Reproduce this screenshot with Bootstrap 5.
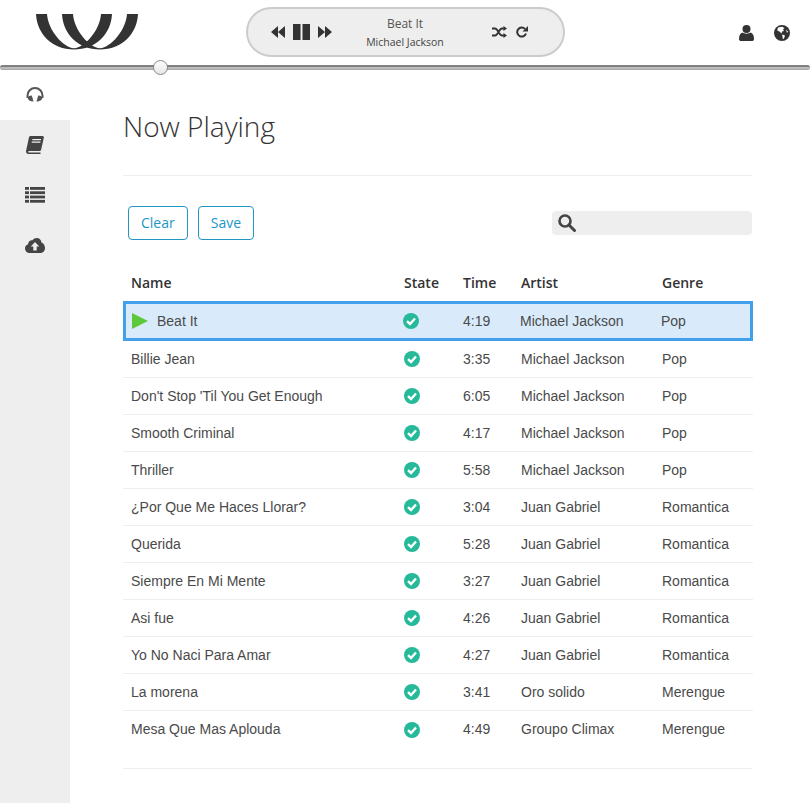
<!DOCTYPE html>
<html lang="en">
<head>
    <meta charset="UTF-8">
    <meta name="viewport" content="width=device-width, initial-scale=1.0">
    <title>Now Playing</title>
    <link href="https://cdn.jsdelivr.net/npm/bootstrap@5.3.0/dist/css/bootstrap.min.css" rel="stylesheet">
    <style>
        body { background-color: #fff; color: #333; font-family: "Open Sans", sans-serif; overflow: hidden; }
        .top-bar { height: 65px; }
        .logo-box { width: 246px; padding: 14px 0 0 36px; align-self: flex-start; }
        .player { width: 319px; height: 50px; margin-top: -1px; background-color: #eee; border: 2px solid #ccc; border-radius: 25px; padding: 0 35px 0 23px; }
        .player-btns { width: 61px; }
        .track-info { text-align: center; line-height: 1; color: #555; padding: 2px 14px 0 0; }
        .track-title { font-size: 12px; margin-bottom: 7px; }
        .track-artist { font-size: 10.5px; color: #444; }
        .player-modes { gap: 9px; }
        .top-icons { gap: 20px; margin-right: 20px; }
        .seek-track { height: 5px; background-color: #bbb; border-top: 2px solid #808080; border-bottom: 1px solid #aaa; border-radius: 3px; }
        .seek-thumb { position: absolute; width: 15px; height: 15px; top: -7px; margin-left: -7px; border-radius: 50%; background: linear-gradient(#fff, #e6e6e6); border: 1px solid #888; }
        .page-body { height: 733px; }
        .side-nav { width: 70px; background-color: #eee; flex: none; }
        .side-item { height: 50px; display: flex; align-items: center; justify-content: center; }
        .side-item.is-active { background-color: #fff; padding-bottom: 1px; }
        .content { width: 629px; margin-left: 53px; }
        .page-title { font-size: 28px; font-weight: 300; line-height: 38px; margin: 37px 0 30px; color: #333; }
        .rule { height: 1px; background-color: #eee; }
        .tool-row { padding: 30px 0 0 5px; }
        .tool-btn { font-size: 14px; height: 34px; padding: 0 12px; line-height: 30px; color: #2196c4; border: 1px solid #2196c4; border-radius: 4px; background: #fff; }
        .tool-gap { margin-right: 10px; }
        .search-box { width: 200px; height: 24px; background-color: #eee; border-radius: 4px; padding-left: 6px; }
        .tracks { table-layout: fixed; width: 630px; border-collapse: separate; border-spacing: 0; margin: 25px 0 20px; color: #4a4a4a; font-family: "Liberation Sans", Arial, sans-serif; font-size: 14px; }
        .tracks th { font-family: "Open Sans", sans-serif; font-size: 14px; font-weight: 600; color: #333; height: 36px; padding: 0 8px 2px; border: 0; vertical-align: middle; }
        .tracks td { height: 37px; padding: 0 8px; vertical-align: middle; border-bottom: 1px solid #eee; }
        .tracks tr:last-child td { border-bottom: 0; }
        .col-state { width: 59px; }
        .col-time { width: 58px; }
        .col-artist { width: 141px; }
        .col-genre { width: 99px; }
        .tracks .playing td { height: 40px; background-color: #d9ebfb; border-top: 3px solid #42a0ea; border-bottom: 3px solid #42a0ea; }
        .tracks .playing td:first-child { border-left: 3px solid #42a0ea; padding-left: 6px; }
        .tracks .playing td:last-child { border-right: 3px solid #42a0ea; }
        .tracks .playing td:nth-child(n+4) { padding-left: 7px; }
        .tracks .playing .check { margin-left: -1px; }
        .play-mark { margin-right: 9px; vertical-align: -3px; }
        .check { display: block; }
    </style>
</head>
<body>
    <div class="top-bar d-flex align-items-center">
        <div class="logo-box">
            <svg width="102" height="36" viewBox="36 14 102 36" fill="#333"><path d="M36 14C37 34 52 49.500 74 49.500C96 49.500 111 34 112 14H101C100 30 85 47.500 74 48.200C63 47.500 48 30 47 14Z"/><path d="M62 14C63 34 78 49.500 100 49.500C122 49.500 137 34 138 14H127C126 30 111 47.500 100 48.200C89 47.500 74 30 73 14Z"/></svg>
        </div>
        <div class="player d-flex align-items-center">
            <div class="player-btns d-flex align-items-center justify-content-between">
                <svg width="14" height="12" viewBox="0 0 14 12" fill="#333"><path d="M7 0V12L0 6ZM14 0V12L7 6Z"/></svg>
                <svg width="17" height="16" viewBox="0 0 17 16" fill="#333"><rect width="7.500" height="16"/><rect x="9.500" width="7.500" height="16"/></svg>
                <svg width="14" height="12" viewBox="0 0 14 12" fill="#333"><path d="M0 0V12L7 6ZM7 0V12L14 6Z"/></svg>
            </div>
            <div class="track-info flex-grow-1">
                <div class="track-title">Beat It</div>
                <div class="track-artist">Michael Jackson</div>
            </div>
            <div class="player-modes d-flex align-items-center">
                <svg width="15" height="12" viewBox="0 0 15 12" fill="none" stroke="#333" stroke-width="1.800"><path d="M0 2.500H3C6 2.500 7 9.500 10 9.500H12.500M0 9.500H3C6 9.500 7 2.500 10 2.500H12.500"/><path d="M11.500 0L15 2.500L11.500 5ZM11.500 7L15 9.500L11.500 12Z" fill="#333" stroke="none"/></svg>
                <svg width="12" height="12" viewBox="0 0 12 12" fill="none" stroke="#333" stroke-width="2"><path d="M10 7.500A4.500 4.500 0 1 1 9 3"/><path d="M12 0V5.500H6.500Z" fill="#333" stroke="none"/></svg>
            </div>
        </div>
        <div class="top-icons ms-auto d-flex align-items-center">
            <svg width="15" height="16" viewBox="0 0 15 16" fill="#333"><circle cx="7.500" cy="4" r="4"/><path d="M0 14C0 10 1.500 8 3.500 7.500C5 9 10 9 11.500 7.500C13.500 8 15 10 15 14C15 15.500 14 16 13 16H2C1 16 0 15.500 0 14Z"/></svg>
            <svg width="16" height="16" viewBox="0 0 16 16"><circle cx="8" cy="8" r="8" fill="#333"/><path d="M4 2.500L8 1.800L10.500 3L9 4.500L10 6L8 6.500L7.500 8.500L5.500 6.500L3.200 5.500ZM8 9.500L11 10.500L10 13.500L8.800 14L8.500 11.500ZM12 4.500L14 6.500L13 8Z" fill="#fff"/></svg>
        </div>
    </div>

    <div class="seek-track position-relative">
        <div class="seek-thumb" style="left: 19.8%"></div>
    </div>

    <div class="page-body d-flex">
        <div class="side-nav">
            <div class="side-item is-active">
                <svg width="18" height="15" viewBox="0 0 18 15" fill="#555"><path d="M.5 11V8.500A8.500 8.500 0 0 1 17.500 8.500V11H15.500V8.500A6.500 6.500 0 0 0 2.500 8.500V11Z"/><path d="M5.800 8.500L7.500 14.500C4 14.500 1.800 13 1.800 10.800C1.800 9.500 3 8.700 5.800 8.500ZM12.200 8.500L10.500 14.500C14 14.500 16.200 13 16.200 10.800C16.200 9.500 15 8.700 12.200 8.500Z"/></svg>
            </div>
            <div class="side-item">
                <svg width="18" height="18" viewBox="0 0 18 18" fill="#444"><path d="M4.500 0H16.500C17.500 0 18 .8 17.800 1.800L15.200 13.500C15 14.500 14.200 15 13.200 15H3.200C2.500 15 2.200 15.700 2.300 16C2.400 16.400 2.800 16.500 3.200 16.500H14.500V18H2.700C1 18 0 16.800 0 15.500C0 15 .1 14.600 .2 14.200L3 1.200C3.200 .4 3.700 0 4.500 0Z"/><path d="M6.500 3H15V4.200H6.200ZM5.900 5.500H14.400V6.700H5.600Z" fill="#eee"/></svg>
            </div>
            <div class="side-item">
                <svg width="20" height="16" viewBox="0 0 20 16" fill="#444"><rect width="4" height="2.800"/><rect x="5" width="15" height="2.800"/><rect y="4.300" width="4" height="2.800"/><rect x="5" y="4.300" width="15" height="2.800"/><rect y="8.600" width="4" height="2.800"/><rect x="5" y="8.600" width="15" height="2.800"/><rect y="12.900" width="4" height="2.800"/><rect x="5" y="12.900" width="15" height="2.800"/></svg>
            </div>
            <div class="side-item">
                <svg width="20" height="15" viewBox="0 0 20 15" fill="#444"><path d="M4.500 15C2 15 0 13 0 10.500C0 8.500 1.200 7 3 6.300C3.200 3.500 5.500 1.800 7.500 2.300C8.500 .8 10 0 11.700 0C14.300 0 16.300 2 16.500 4.600C18.500 5.500 20 7.500 20 10C20 13 17.800 15 15 15Z"/><path d="M10 4L14.200 8.500H11.700V12.500H8.300V8.500H5.800Z" fill="#eee"/></svg>
            </div>
        </div>

        <div class="content">
            <h1 class="page-title">Now Playing</h1>
            <div class="rule"></div>
            <div class="tool-row d-flex align-items-center">
                <button type="button" class="btn tool-btn tool-gap">Clear</button>
                <button type="button" class="btn tool-btn">Save</button>
                <div class="search-box d-flex align-items-center ms-auto">
                    <svg width="18" height="18" viewBox="0 0 18 18" fill="none" stroke="#444"><circle cx="7" cy="7" r="5.500" stroke-width="2.600"/><path d="M11 11L16.500 16.500" stroke-width="3" stroke-linecap="round"/></svg>
                </div>
            </div>

            <table class="tracks" id="tracks">
                <colgroup><col><col class="col-state"><col class="col-time"><col class="col-artist"><col class="col-genre"></colgroup>
                <thead><tr><th>Name</th><th>State</th><th>Time</th><th>Artist</th><th>Genre</th></tr></thead>
                <tbody></tbody>
            </table>
            <div class="rule"></div>
        </div>
    </div>

    <script>
        const songs = [
            ["Beat It", "4:19", "Michael Jackson", "Pop"],
            ["Billie Jean", "3:35", "Michael Jackson", "Pop"],
            ["Don't Stop 'Til You Get Enough", "6:05", "Michael Jackson", "Pop"],
            ["Smooth Criminal", "4:17", "Michael Jackson", "Pop"],
            ["Thriller", "5:58", "Michael Jackson", "Pop"],
            ["¿Por Que Me Haces Llorar?", "3:04", "Juan Gabriel", "Romantica"],
            ["Querida", "5:28", "Juan Gabriel", "Romantica"],
            ["Siempre En Mi Mente", "3:27", "Juan Gabriel", "Romantica"],
            ["Asi fue", "4:26", "Juan Gabriel", "Romantica"],
            ["Yo No Naci Para Amar", "4:27", "Juan Gabriel", "Romantica"],
            ["La morena", "3:41", "Oro solido", "Merengue"],
            ["Mesa Que Mas Aplouda", "4:49", "Groupo Climax", "Merengue"]
        ];
        const check = '<svg class="check" width="16" height="16" viewBox="0 0 16 16"><circle cx="8" cy="8" r="8" fill="#26b99a"/><path d="M4 8.200L7 11L12 5.500" fill="none" stroke="#fff" stroke-width="2.400"/></svg>';
        const play = '<svg class="play-mark" width="16" height="16" viewBox="0 0 16 16"><path d="M0 0L16 8L0 16Z" fill="#5cc93b"/></svg>';
        document.querySelector("#tracks tbody").innerHTML = songs.map((s, i) => `
            <tr class="${i === 0 ? "playing" : ""}">
                <td>${i === 0 ? play : ""}${s[0]}</td>
                <td>${check}</td>
                <td>${s[1]}</td>
                <td>${s[2]}</td>
                <td>${s[3]}</td>
            </tr>`).join("");
    </script>
    <script src="https://cdn.jsdelivr.net/npm/bootstrap@5.3.0/dist/js/bootstrap.bundle.min.js"></script>
</body>
</html>
